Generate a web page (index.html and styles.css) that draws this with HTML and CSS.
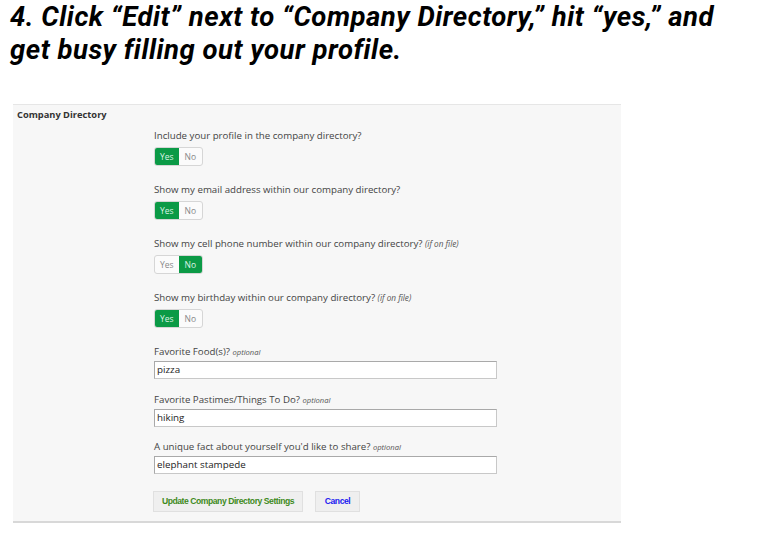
FILE: index.html
```html
<!DOCTYPE html>
<html>
<head>
<meta charset="utf-8">
<link rel="stylesheet" href="styles.css">
</head>
<body>
<h1 class="title">4. Click “Edit” next to “Company Directory,” hit “yes,” and get busy filling out your profile.</h1>
<div class="panel">
  <div class="panel-label">Company Directory</div>
  <div class="form">
    <div class="row">
      <div class="q">Include your profile in the company directory?</div>
      <div class="toggle"><span class="opt on">Yes</span><span class="opt">No</span></div>
    </div>
    <div class="row">
      <div class="q">Show my email address within our company directory?</div>
      <div class="toggle"><span class="opt on">Yes</span><span class="opt">No</span></div>
    </div>
    <div class="row">
      <div class="q">Show my cell phone number within our company directory? <em class="note">(if on file)</em></div>
      <div class="toggle"><span class="opt">Yes</span><span class="opt on">No</span></div>
    </div>
    <div class="row">
      <div class="q">Show my birthday within our company directory? <em class="note">(if on file)</em></div>
      <div class="toggle"><span class="opt on">Yes</span><span class="opt">No</span></div>
    </div>
    <div class="field">
      <div class="q">Favorite Food(s)? <em class="note">optional</em></div>
      <div class="input">pizza</div>
    </div>
    <div class="field">
      <div class="q">Favorite Pastimes/Things To Do? <em class="note">optional</em></div>
      <div class="input">hiking</div>
    </div>
    <div class="field">
      <div class="q">A unique fact about yourself you'd like to share? <em class="note">optional</em></div>
      <div class="input">elephant stampede</div>
    </div>
    <div class="buttons">
      <span class="btn btn-update">Update Company Directory Settings</span>
      <span class="btn btn-cancel">Cancel</span>
    </div>
  </div>
</div>
</body>
</html>
```
FILE: styles.css
```css
html, body {
  margin: 0;
  padding: 0;
  background: #ffffff;
}
body {
  width: 764px;
  height: 553px;
  overflow: hidden;
  font-family: "Open Sans", "DejaVu Sans", sans-serif;
}
.title {
  margin: 0;
  padding: 0 0 0 10px;
  width: 728px;
  height: 104px;
  box-sizing: border-box;
  font-family: Roboto, "Open Sans", sans-serif;
  font-style: italic;
  font-weight: bold;
  font-size: 27.5px;
  letter-spacing: 0.5px;
  line-height: 33px;
  color: #000;
}
.panel {
  margin-left: 13px;
  width: 608px;
  height: 419px;
  box-sizing: border-box;
  background: #f7f7f7;
  border-top: 1px solid #e6e6e6;
  border-bottom: 2px solid #d8d8d8;
  display: flex;
}
.panel-label {
  width: 141px;
  padding: 4px 0 0 4px;
  font-size: 9.3px;
  font-weight: bold;
  color: #333;
  box-sizing: border-box;
  line-height: 12px;
}
.form {
  padding-top: 24px;
  display: flex;
  flex-direction: column;
}
.row {
  height: 54px;
  display: flex;
  flex-direction: column;
  gap: 4px;
}
.q {
  font-size: 9.7px;
  color: #444;
  line-height: 14px;
  white-space: nowrap;
}
.note {
  font-size: 7.6px;
  color: #555;
}
.row .note {
  font-size: 8.2px;
}
.toggle {
  display: flex;
  width: 49px;
  height: 19px;
  border: 1px solid #d6d6d6;
  border-radius: 3px;
  box-sizing: border-box;
  overflow: hidden;
  background: #fbfbfb;
}
.opt {
  flex: 1;
  display: flex;
  align-items: center;
  justify-content: center;
  font-size: 8.5px;
  color: #888;
}
.opt.on {
  background: #0b9a46;
  color: #dff3e6;
}
.field {
  height: 47.5px;
  display: flex;
  flex-direction: column;
  gap: 2px;
}
.input {
  width: 343px;
  height: 18px;
  box-sizing: border-box;
  border: 1px solid #a9a9a9;
  border-right-color: #c8c8c8;
  border-bottom-color: #c8c8c8;
  background: #fff;
  font-size: 9.8px;
  color: #222;
  line-height: 16px;
  padding-left: 2px;
}
.buttons {
  margin-top: 3px;
  display: flex;
  gap: 12px;
}
.btn {
  height: 21px;
  box-sizing: border-box;
  border: 1px solid #e0e0e0;
  background: #efefef;
  font-family: "Liberation Sans", Arial, sans-serif;
  font-weight: bold;
  font-size: 8.6px;
  letter-spacing: -0.45px;
  white-space: nowrap;
  display: flex;
  align-items: center;
  justify-content: center;
}
.btn-update {
  width: 150px;
  margin-left: -1px;
  color: #3e8a1c;
}
.btn-cancel {
  width: 45px;
  color: #1b1bf0;
}
```
